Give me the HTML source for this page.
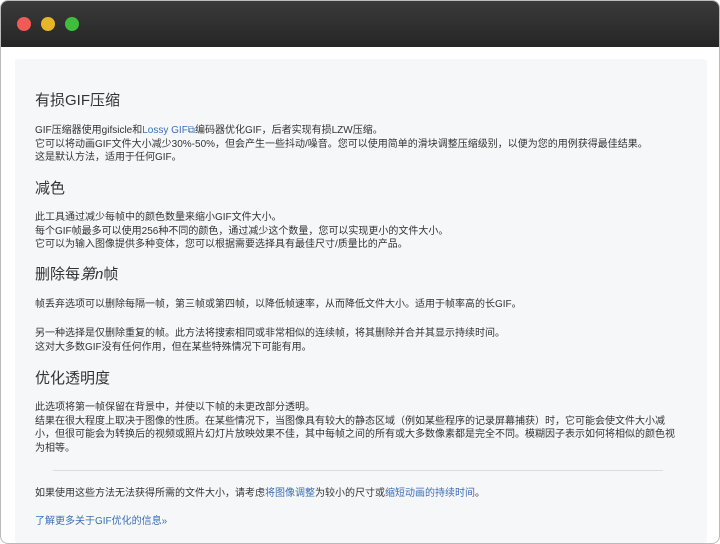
<!DOCTYPE html>
<html><head><meta charset="utf-8"><style>
*{margin:0;padding:0;box-sizing:border-box}
html,body{width:720px;height:544px;overflow:hidden;background:#fff}
body{font-family:"Liberation Sans","Noto Sans CJK SC",sans-serif;color:#333}
.win{position:absolute;left:0;top:0;width:720px;height:544px;border-radius:8px;overflow:hidden;background:#fff;border:1px solid #bbb}
.bar{height:46px;background:linear-gradient(#3a3a3a,#262626);position:relative}
.dot{position:absolute;top:16px;width:14px;height:14px;border-radius:50%}
.panel{position:absolute;left:14px;top:58px;width:692px;height:484px;background:#f6f7f8;border-radius:3px}
.t{position:absolute;left:34px;font-size:10px;line-height:13.5px;white-space:nowrap;color:#333}
h2{position:absolute;left:34px;font-size:15px;font-weight:normal;color:#333;line-height:18px}
a{color:#3b6fb5;text-decoration:none}
.hr{position:absolute;left:52px;width:610px;top:469px;height:1px;background:#ddd}
</style></head><body><div class="win">
<div class="bar"><div class="dot" style="left:16px;background:#f25a55"></div><div class="dot" style="left:40px;background:#e6b52a"></div><div class="dot" style="left:64px;background:#3fbe3c"></div></div>
<div class="panel"></div>
<h2 style="top:91px">有损GIF压缩</h2>
<div class="t" style="top:123px">GIF压缩器使用gifsicle和<a>Lossy GIF⧉</a>编码器优化GIF，后者实现有损LZW压缩。<br>它可以将动画GIF文件大小减少30%-50%，但会产生一些抖动/噪音。您可以使用简单的滑块调整压缩级别，以便为您的用例获得最佳结果。<br>这是默认方法，适用于任何GIF。</div>
<h2 style="top:179px">减色</h2>
<div class="t" style="top:210px">此工具通过减少每帧中的颜色数量来缩小GIF文件大小。<br>每个GIF帧最多可以使用256种不同的颜色，通过减少这个数量，您可以实现更小的文件大小。<br>它可以为输入图像提供多种变体，您可以根据需要选择具有最佳尺寸/质量比的产品。</div>
<h2 style="top:265px">删除每<i>第n</i>帧</h2>
<div class="t" style="top:297px">帧丢弃选项可以删除每隔一帧，第三帧或第四帧，以降低帧速率，从而降低文件大小。适用于帧率高的长GIF。</div>
<div class="t" style="top:326px">另一种选择是仅删除重复的帧。此方法将搜索相同或非常相似的连续帧，将其删除并合并其显示持续时间。<br>这对大多数GIF没有任何作用，但在某些特殊情况下可能有用。</div>
<h2 style="top:369px">优化透明度</h2>
<div class="t" style="top:400px">此选项将第一帧保留在背景中，并使以下帧的未更改部分透明。<br>结果在很大程度上取决于图像的性质。在某些情况下，当图像具有较大的静态区域（例如某些程序的记录屏幕捕获）时，它可能会使文件大小减<br>小，但很可能会为转换后的视频或照片幻灯片放映效果不佳，其中每帧之间的所有或大多数像素都是完全不同。模糊因子表示如何将相似的颜色视<br>为相等。</div>
<div class="hr"></div>
<div class="t" style="top:486px">如果使用这些方法无法获得所需的文件大小，请考虑<a>将图像调整</a>为较小的尺寸或<a>缩短动画的持续时间</a>。</div>
<div class="t" style="top:514px"><a>了解更多关于GIF优化的信息»</a></div>
</div></body></html>
